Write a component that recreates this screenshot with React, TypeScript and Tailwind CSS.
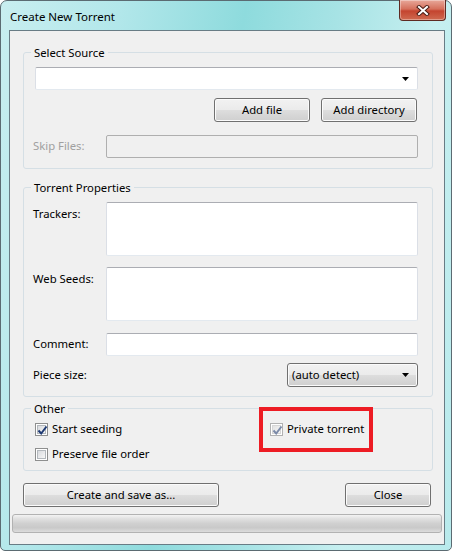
import React from "react";

const btn =
  "h-[24px] rounded-[3px] border border-[#707070] bg-[linear-gradient(to_bottom,#f2f2f2_0%,#ebebeb_48%,#dddddd_52%,#cfcfcf_100%)] shadow-[inset_0_0_0_1px_#fbfbfb] text-[11.3px] text-black flex items-center justify-center";

const textbox =
  "border border-[#abadb3] border-x-[#dbdfe6] border-b-[#e3e9ef] bg-white rounded-[2px]";

const Arrow = () => (
  <svg width="7" height="4" viewBox="0 0 7 4">
    <path d="M0 0h7L3.5 4z" fill="#000" />
  </svg>
);

const CheckBox = ({ checked, disabled }: { checked?: boolean; disabled?: boolean }) => (
  <span
    className={
      "relative w-[13px] h-[13px] shrink-0 border p-[1px] bg-white flex " +
      (disabled ? "border-[#b1b1b1]" : "border-[#8e8f8f]")
    }
  >
    <span
      className={
        "flex-1 border " +
        (disabled
          ? "border-[#d6d6d6] bg-[linear-gradient(135deg,#e2e2e2,#f6f6f6)]"
          : "border-[#b3b8bd] bg-[linear-gradient(135deg,#d8dade,#f7f7f7)]")
      }
    />
    {checked && (
      <svg className="absolute left-[1px] top-[1px]" width="11" height="11" viewBox="0 0 11 11">
        <path
          d="M1.5 5.5 L4.2 8.5 L9.5 1.5"
          fill="none"
          stroke={disabled ? "#7b8aa8" : "#1f3a73"}
          strokeWidth="2"
        />
      </svg>
    )}
  </span>
);

const Group = ({ title, className, children }: { title: string; className?: string; children: React.ReactNode }) => (
  <fieldset className={"border border-[#d5dfe5] rounded-[3px] mx-[13px] mr-[11px] " + (className ?? "")}>
    <legend className="ml-[7px] px-[3px] text-[11.3px] leading-[15px] text-black">{title}</legend>
    {children}
  </fieldset>
);

export default function App() {
  return (
    <div className="w-[452px] h-[551px] flex flex-col rounded-t-[7px] rounded-b-[5px] border border-[#5b6b72] bg-[linear-gradient(100deg,#c8eef0_0%,#b2e7ea_22%,#8edbdd_45%,#a7e3e5_62%,#c6eff0_80%,#b8eaec_100%)] font-['Segoe_UI','Noto_Sans',sans-serif] text-[11.3px] text-black">
      {/* title bar */}
      <div className="h-[29px] flex justify-between pl-[9px] pr-[5px]">
        <span className="self-center text-[11.5px] leading-[15px] mt-[1px]">Create New Torrent</span>
        <div className="-mt-[1px] w-[47px] h-[21px] rounded-b-[4px] border border-[#5e2a22] border-t-0 bg-[linear-gradient(to_bottom,#e8a89a_0%,#d5705c_45%,#c4442f_55%,#cf6a50_100%)] shadow-[inset_0_0_0_1px_rgba(255,255,255,0.35)] flex items-center justify-center">
          <svg width="14" height="11" viewBox="0 0 14 11">
            <path d="M3 2 L11 9 M11 2 L3 9" stroke="#4a1c14" strokeWidth="4" strokeLinecap="square" />
            <path d="M3 2 L11 9 M11 2 L3 9" stroke="#ffffff" strokeWidth="2" strokeLinecap="square" />
          </svg>
        </div>
      </div>

      {/* client area */}
      <div className="flex-1 ml-[8px] mr-[6px] mb-[5px] border border-[#687c85] bg-[#f0f0f0] flex flex-col pt-[14px]">
        <Group title="Select Source">
          <div className="pt-[7px] pb-[10px] pl-[9px] pr-[14px] flex flex-col">
            <div className={textbox + " ml-[2px] h-[23px] flex items-center justify-end pr-[8px]"}>
              <Arrow />
            </div>
            <div className="flex justify-end gap-[11px] mt-[8px] mr-[1px]">
              <button className={btn + " w-[96px]"}>Add file</button>
              <button className={btn + " w-[96px]"}>Add directory</button>
            </div>
            <div className="flex items-center mt-[13px]">
              <span className="w-[73px] text-[#a0a0a0]">Skip Files:</span>
              <div className="flex-1 h-[23px] border border-[#afafaf] bg-[#f0f0f0] rounded-[2px]" />
            </div>
          </div>
        </Group>

        <Group title="Torrent Properties" className="mt-[11px]">
          <div className="pt-[7px] pb-[9px] pl-[9px] pr-[14px] flex flex-col">
            <div className="flex">
              <span className="w-[73px] mt-[4px]">Trackers:</span>
              <div className={textbox + " flex-1 h-[54px]"} />
            </div>
            <div className="flex mt-[11px]">
              <span className="w-[73px] mt-[4px]">Web Seeds:</span>
              <div className={textbox + " flex-1 h-[54px]"} />
            </div>
            <div className="flex items-center mt-[12px]">
              <span className="w-[73px]">Comment:</span>
              <div className={textbox + " flex-1 h-[23px]"} />
            </div>
            <div className="flex items-center justify-between mt-[7px]">
              <span>Piece size:</span>
              <div className={btn + " w-[131px] !justify-between pl-[4px] pr-[8px]"}>
                <span>(auto detect)</span>
                <Arrow />
              </div>
            </div>
          </div>
        </Group>

        <Group title="Other" className="mt-[4px]">
          <div className="pt-[6px] pb-[8px] pl-[11px] grid grid-cols-[235px_1fr] gap-y-[10px]">
            <label className="flex items-center gap-[4px] h-[15px]">
              <CheckBox checked />
              <span>Start seeding</span>
            </label>
            <div className="flex">
              <label className="relative flex items-center gap-[4px] h-[15px]">
                <CheckBox checked disabled />
                <span>Private torrent</span>
                <span className="absolute -left-[11px] -right-[9px] -top-[15px] -bottom-[15px] border-4 border-[#ed1c24]" />
              </label>
            </div>
            <label className="flex items-center gap-[4px] h-[15px]">
              <CheckBox />
              <span>Preserve file order</span>
            </label>
          </div>
        </Group>

        <div className="flex justify-between mt-[12px] ml-[13px] mr-[13px]">
          <button className={btn + " w-[196px]"}>Create and save as...</button>
          <button className={btn + " w-[86px]"}>Close</button>
        </div>

        <div className="mt-[7px] mx-[2px] h-[19px] rounded-[3px] border border-[#b2b2b2] bg-[linear-gradient(to_bottom,#f3f3f3_0%,#e2e2e2_20%,#d0d0d0_50%,#c9c9c9_75%,#dcdcdc_100%)]" />
      </div>
    </div>
  );
}
